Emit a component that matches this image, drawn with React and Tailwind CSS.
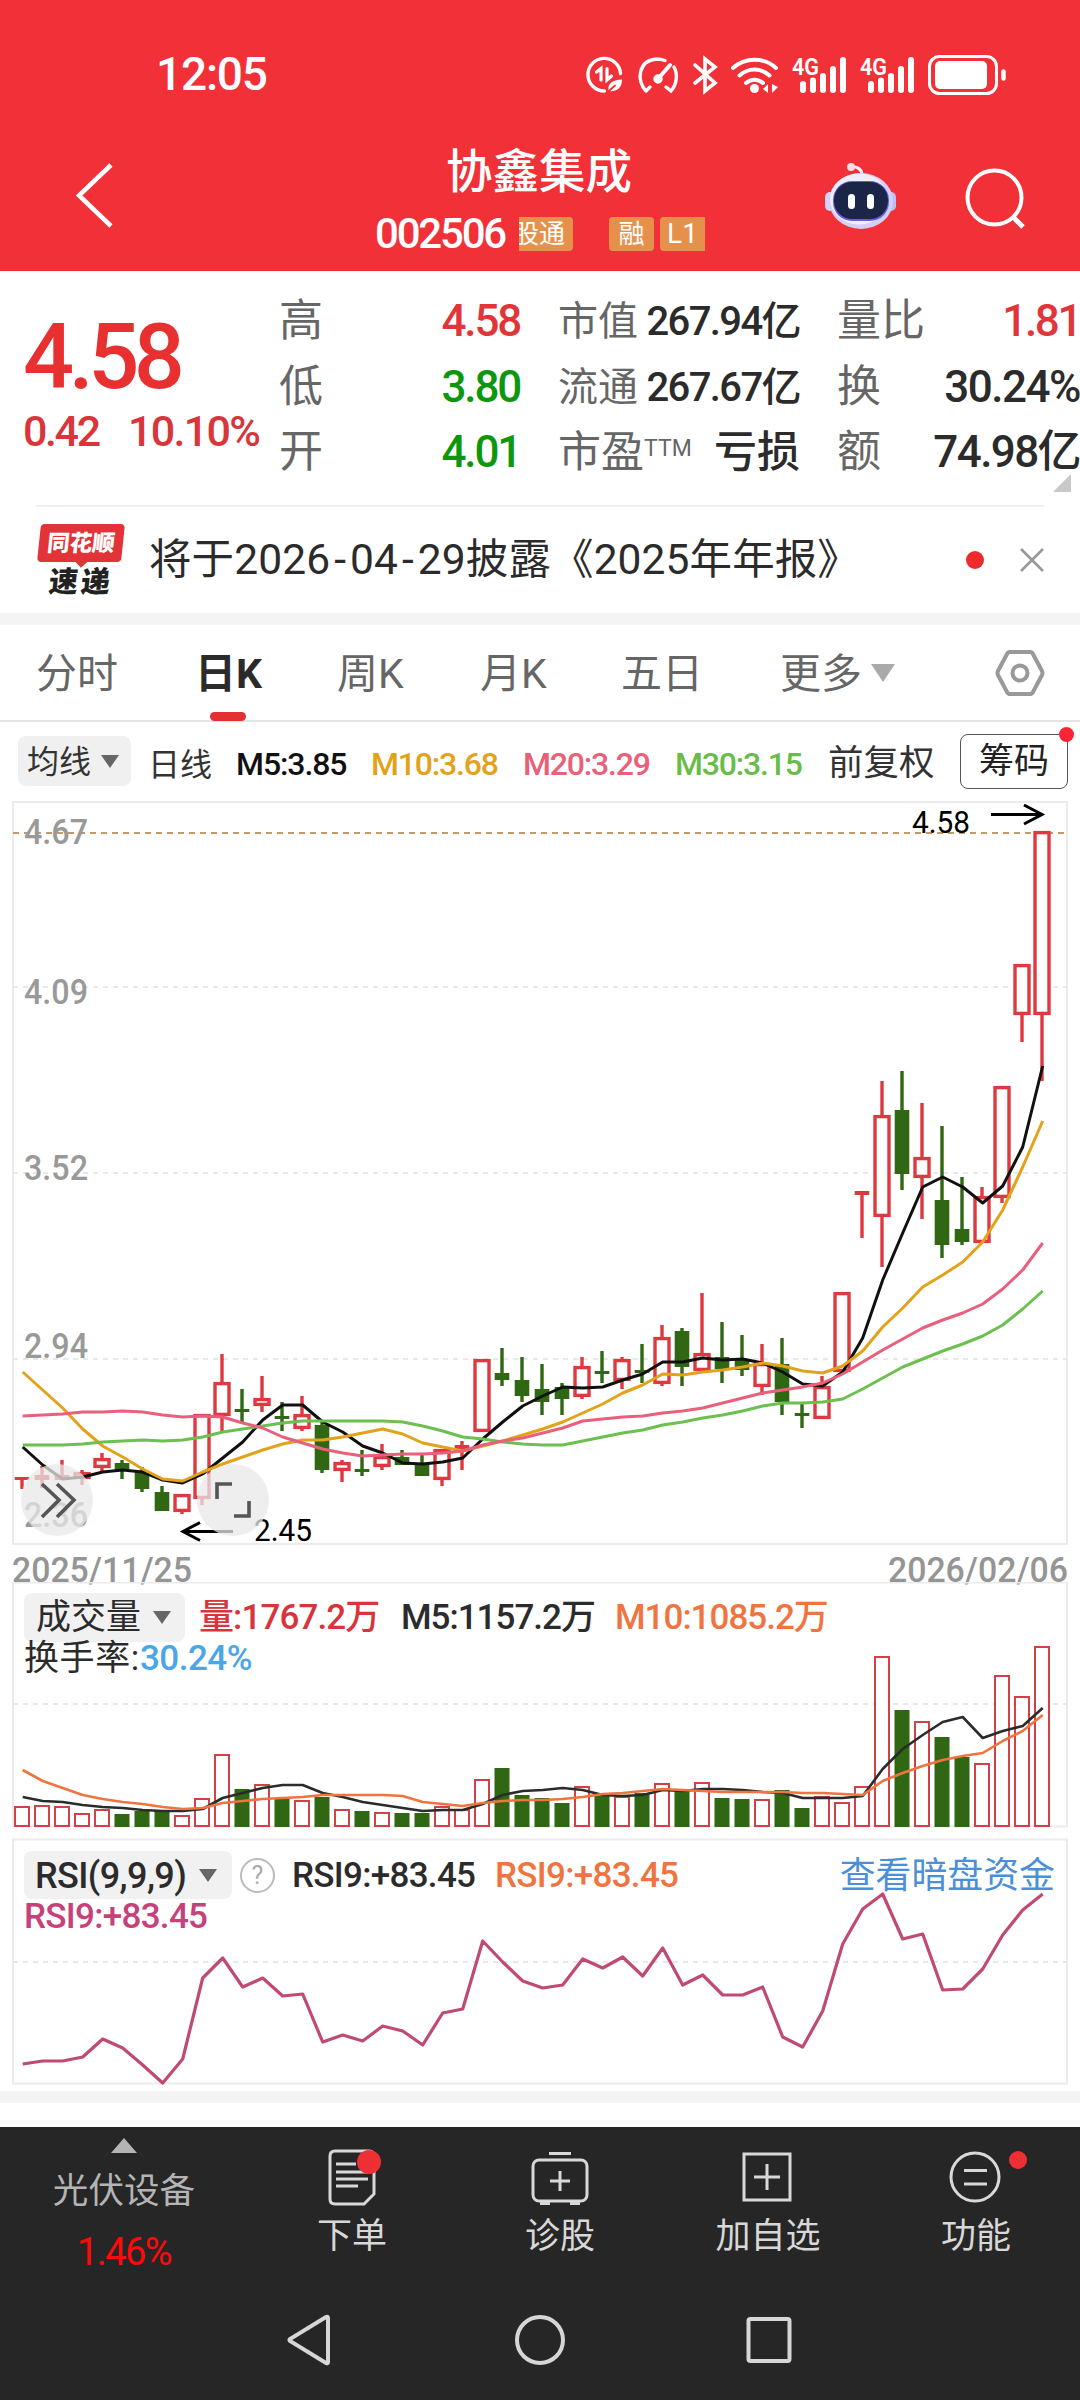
import React from "react";

const STEP = 20;
const X0 = 22;
const RED = "#dc3a40";
const GREEN = "#2f6712";

// type, body top, body bottom, wick top, wick bottom (r = up, g = down)
const candles = [
  ["r", 1477, 1480, 1477, 1489],
  ["r", 1475, 1480, 1466, 1488],
  ["r", 1475, 1480, 1460, 1480],
  ["r", 1472, 1479, 1470, 1485],
  ["r", 1458, 1468, 1453, 1471],
  ["g", 1463, 1471, 1460, 1479],
  ["g", 1472, 1489, 1467, 1492],
  ["g", 1492, 1511, 1486, 1511],
  ["r", 1494, 1512, 1494, 1514],
  ["r", 1414, 1499, 1414, 1505],
  ["r", 1382, 1416, 1354, 1432],
  ["g", 1409, 1412, 1389, 1423],
  ["r", 1398, 1406, 1376, 1412],
  ["g", 1416, 1419, 1402, 1431],
  ["r", 1414, 1429, 1396, 1431],
  ["g", 1425, 1470, 1422, 1473],
  ["r", 1462, 1471, 1460, 1482],
  ["g", 1469, 1472, 1450, 1476],
  ["r", 1456, 1467, 1444, 1470],
  ["g", 1457, 1465, 1450, 1465],
  ["g", 1464, 1476, 1455, 1476],
  ["r", 1449, 1480, 1449, 1486],
  ["r", 1445, 1449, 1441, 1470],
  ["r", 1359, 1432, 1359, 1432],
  ["g", 1373, 1380, 1348, 1386],
  ["g", 1380, 1396, 1357, 1402],
  ["g", 1389, 1402, 1364, 1415],
  ["g", 1387, 1399, 1383, 1415],
  ["r", 1366, 1397, 1357, 1399],
  ["g", 1371, 1374, 1351, 1383],
  ["r", 1359, 1381, 1357, 1389],
  ["g", 1370, 1373, 1344, 1383],
  ["r", 1337, 1384, 1325, 1386],
  ["g", 1331, 1367, 1328, 1386],
  ["r", 1353, 1371, 1293, 1371],
  ["g", 1357, 1369, 1322, 1383],
  ["g", 1360, 1370, 1335, 1376],
  ["r", 1363, 1387, 1344, 1395],
  ["g", 1364, 1402, 1338, 1415],
  ["g", 1413, 1416, 1403, 1428],
  ["r", 1386, 1419, 1376, 1419],
  ["r", 1292, 1372, 1292, 1372],
  ["r", 1191, 1195, 1193, 1238],
  ["r", 1115, 1217, 1081, 1267],
  ["g", 1110, 1174, 1071, 1190],
  ["r", 1157, 1178, 1103, 1219],
  ["g", 1200, 1245, 1126, 1258],
  ["g", 1229, 1242, 1177, 1245],
  ["r", 1196, 1243, 1187, 1243],
  ["r", 1086, 1198, 1086, 1203],
  ["r", 964, 1015, 964, 1042],
  ["r", 831, 1015, 831, 1081],
];

const ma5 = [1447, 1465, 1479, 1477, 1472, 1470, 1472, 1480, 1483, 1474, 1458, 1442, 1420, 1405, 1405, 1422, 1432, 1446, 1453, 1463, 1464, 1462, 1458, 1439, 1422, 1406, 1396, 1387, 1388, 1387, 1380, 1374, 1362, 1362, 1358, 1360, 1359, 1363, 1372, 1384, 1386, 1372, 1338, 1280, 1233, 1187, 1177, 1187, 1203, 1186, 1147, 1066];
const ma10 = [1372, 1390, 1408, 1429, 1446, 1457, 1469, 1479, 1481, 1472, 1464, 1457, 1450, 1444, 1440, 1440, 1437, 1433, 1429, 1434, 1443, 1447, 1451, 1446, 1441, 1435, 1429, 1422, 1413, 1404, 1393, 1385, 1374, 1375, 1372, 1370, 1367, 1363, 1366, 1371, 1373, 1366, 1351, 1327, 1308, 1287, 1275, 1262, 1242, 1210, 1167, 1121];
const ma20 = [1416, 1415, 1414, 1412, 1412, 1411, 1412, 1415, 1417, 1416, 1417, 1423, 1428, 1437, 1443, 1449, 1453, 1456, 1455, 1454, 1454, 1453, 1451, 1445, 1441, 1438, 1433, 1428, 1421, 1419, 1417, 1416, 1413, 1411, 1408, 1403, 1398, 1393, 1390, 1387, 1383, 1374, 1362, 1350, 1339, 1328, 1320, 1313, 1304, 1289, 1270, 1243];
const ma30 = [1445, 1445, 1445, 1444, 1442, 1441, 1440, 1441, 1440, 1437, 1432, 1429, 1426, 1423, 1421, 1421, 1421, 1421, 1421, 1422, 1426, 1431, 1437, 1439, 1442, 1444, 1445, 1445, 1441, 1437, 1433, 1430, 1425, 1422, 1418, 1415, 1411, 1406, 1403, 1403, 1402, 1399, 1389, 1378, 1367, 1359, 1351, 1344, 1336, 1325, 1309, 1291];

const volumes = [1806, 1805, 1806, 1813, 1809, 1814, 1811, 1811, 1815, 1798, 1754, 1789, 1784, 1798, 1800, 1797, 1809, 1811, 1812, 1813, 1813, 1806, 1809, 1779, 1768, 1795, 1798, 1803, 1786, 1796, 1796, 1793, 1783, 1790, 1782, 1798, 1799, 1799, 1790, 1808, 1796, 1802, 1786, 1656, 1710, 1721, 1737, 1757, 1763, 1675, 1696, 1646];
const vol5 = [1797, 1801, 1802, 1805, 1807, 1808, 1810, 1811, 1811, 1809, 1798, 1793, 1788, 1785, 1785, 1793, 1797, 1802, 1805, 1808, 1811, 1810, 1810, 1804, 1795, 1791, 1790, 1788, 1790, 1795, 1796, 1795, 1790, 1791, 1789, 1789, 1790, 1792, 1793, 1798, 1798, 1798, 1796, 1769, 1749, 1735, 1722, 1717, 1738, 1731, 1726, 1708];
const vol10 = [1770, 1781, 1788, 1795, 1799, 1802, 1804, 1807, 1809, 1808, 1803, 1801, 1799, 1798, 1797, 1795, 1795, 1795, 1795, 1796, 1802, 1804, 1806, 1803, 1801, 1800, 1800, 1799, 1797, 1794, 1793, 1791, 1789, 1790, 1791, 1792, 1792, 1792, 1792, 1793, 1793, 1794, 1795, 1781, 1773, 1766, 1760, 1756, 1753, 1741, 1731, 1715];

const rsi = [2064, 2061, 2061, 2057, 2039, 2048, 2065, 2083, 2059, 1978, 1958, 1987, 1978, 1996, 1994, 2042, 2035, 2041, 2026, 2031, 2045, 2013, 2009, 1941, 1962, 1981, 1988, 1985, 1959, 1968, 1957, 1976, 1948, 1985, 1975, 1995, 1995, 1987, 2037, 2047, 2011, 1944, 1909, 1894, 1939, 1934, 1990, 1989, 1969, 1935, 1910, 1894];

const priceLabels = [
  { text: "4.67", y: 844 },
  { text: "4.09", y: 1004 },
  { text: "3.52", y: 1180 },
  { text: "2.94", y: 1358 },
  { text: "2.36", y: 1527 },
];

function Line({ data, color, width = 3 }) {
  const points = data.map((y, i) => `${X0 + 0.7 + i * STEP},${y}`).join(" ");
  return <polyline points={points} fill="none" stroke={color} strokeWidth={width} strokeLinejoin="round" />;
}

function Candle({ x, item }) {
  const [type, top, bottom, high, low] = item;
  const color = type === "r" ? RED : GREEN;
  const hollow = type === "r" && bottom - top > 6;
  return (
    <g>
      {high < top && <rect x={x - 1.7} y={high} width="3.4" height={top - high} fill={color} />}
      {low > bottom && <rect x={x - 1.7} y={bottom} width="3.4" height={low - bottom} fill={color} />}
      {hollow ? (
        <rect x={x - 7} y={top + 1.6} width="14" height={bottom - top - 3.2} fill="#fff" stroke={color} strokeWidth="3.4" />
      ) : (
        <rect x={x - 7.3} y={top} width="14.6" height={bottom - top} fill={color} />
      )}
    </g>
  );
}

function GridLine({ y }) {
  return <line x1="13" x2="1067" y1={y} y2={y} stroke="#e8e8e8" strokeWidth="2" strokeDasharray="5 5" />;
}

function Frame({ y, height }) {
  return <rect x="13" y={y} width="1054" height={height} fill="none" stroke="#ebebeb" strokeWidth="2" />;
}

function KChart() {
  return (
    <svg className="block h-[782px] w-full overflow-visible" viewBox="0 800 1080 782" fontFamily="Roboto">
      <Frame y={802} height={742} />
      <GridLine y={987} />
      <GridLine y={1173} />
      <GridLine y={1359} />
      <line x1="13" x2="1067" y1="833" y2="833" stroke="#c49a6a" strokeWidth="2" strokeDasharray="6 5" />
      {priceLabels.map((l) => (
        <text key={l.text} x="24" y={l.y} textLength="64" lengthAdjust="spacingAndGlyphs" fontSize="35" fontWeight="500" fill="#999">{l.text}</text>
      ))}
      {candles.map((c, i) => (
        <Candle key={i} x={X0 + i * STEP} item={c} />
      ))}
      <Line data={ma5} color="#101010" />
      <Line data={ma10} color="#e3a21a" />
      <Line data={ma30} color="#6bc04f" />
      <Line data={ma20} color="#ea5f7c" />

      <g fill="none" stroke="#000" strokeWidth="3">
        <path d="M991 814.500H1042M1024 805l18 9.500-18 9.500" />
        <path d="M233 1531.500H183M200 1522.500l-17 9 17 9" />
      </g>
      <text x="912" y="832.500" textLength="58" lengthAdjust="spacingAndGlyphs" fontSize="32">4.58</text>
      <text x="254" y="1541" textLength="58" lengthAdjust="spacingAndGlyphs" fontSize="32">2.45</text>

      <circle cx="57" cy="1500" r="36" fill="#e8e8e8" fillOpacity="0.75" />
      <circle cx="233" cy="1500" r="36" fill="#e8e8e8" fillOpacity="0.75" />
      <g fill="none" stroke="#555" strokeWidth="3.600">
        <path d="M42 1484l17 16-17 17M57 1484l17 16-17 17" />
        <path d="M217 1499v-15h15M249 1501v15h-15" />
      </g>
      <text x="12" y="1582" textLength="180" lengthAdjust="spacingAndGlyphs" fontSize="35" fontWeight="500" fill="#959595">2025/11/25</text>
      <text x="888" y="1582" textLength="180" lengthAdjust="spacingAndGlyphs" fontSize="35" fontWeight="500" fill="#959595">2026/02/06</text>
    </svg>
  );
}

function VolumeChart() {
  return (
    <svg className="block h-[256px] w-full" viewBox="0 1582 1080 256">
      <Frame y={1582.5} height={244} />
      <GridLine y={1704} />
      {volumes.map((top, i) => {
        const x = X0 + i * STEP;
        const h = 1827 - top;
        return candles[i][0] === "r" ? (
          <rect key={i} x={x - 7} y={top + 1} width="14" height={h - 2} fill="#fff" stroke="#d24148" strokeWidth="2" />
        ) : (
          <rect key={i} x={x - 7.5} y={top} width="15" height={h} fill={GREEN} />
        );
      })}
      <Line data={vol5} color="#2b2b2b" width={2.6} />
      <Line data={vol10} color="#f0743f" width={2.6} />
    </svg>
  );
}

function RsiChart() {
  return (
    <svg className="block h-[253px] w-full" viewBox="0 1838 1080 253">
      <Frame y={1839.5} height={244} />
      <GridLine y={1962} />
      <Line data={rsi} color="#c04a74" width={3.2} />
    </svg>
  );
}

function DownArrow({ className }) {
  return (
    <svg className={className} viewBox="0 0 18 13" preserveAspectRatio="none">
      <path d="M0 0h18l-9 13z" fill="currentColor" />
    </svg>
  );
}

function StatusIcons() {
  return (
    <svg className="h-[44px] w-[430px]" viewBox="580 50 430 44" fill="none" stroke="#fff" strokeWidth="3.400" strokeLinecap="round">
      {/* data saver */}
      <path d="M620.500 71.500a16.300 16.300 0 1 0-16 17.500" />
      <path d="M596.500 70l4.500-3.500v11.500M607 66.500v11.500l4.500-4" strokeWidth="3.200" />
      <path d="M608.500 89c-1-7 3-11 13.500-11.500 0 8-4.500 12.500-13.500 11.500z" fill="#fff" stroke="none" />
      <path d="M606 91.500l9-8" stroke="#f23038" strokeWidth="1.800" />
      {/* speed */}
      <path d="M646 89c-10-10-8-31 11-32 3 0 5 .5 8 1.500M674 65c4 7 3 17-3 24l-5-4M646 89l4-4" />
      <path d="M657 78l13-15" strokeWidth="4" />
      <circle cx="658" cy="77" r="3" fill="#fff" />
      {/* bluetooth */}
      <path d="M695 63l20 18-10 8V57l10 8-20 16" strokeWidth="3.600" />
      {/* wifi */}
      <path d="M733 66c12-11 31-11 43 0M739.500 73.500c9-8 21-8 30 0M746 81c5-4.500 12-4.500 17 0" strokeWidth="4" />
      <circle cx="754.500" cy="86.500" r="4.500" fill="#fff" stroke="none" />
      <path d="M763 87l5-5v9zM778 85l-6-3v9z" fill="#fff" stroke="none" />
      {[793, 861].map((x) => (
        <g key={x} stroke="none" fill="#fff">
          <text x={x - 1} y="72.500" fontSize="24" fontFamily="Roboto" fontWeight="600" textLength="27" lengthAdjust="spacingAndGlyphs">4G</text>
          <rect x={x + 7} y="79" width="6" height="12" rx="3" />
          <rect x={x + 17} y="75.500" width="6" height="15.500" rx="3" />
          <rect x={x + 27} y="71" width="6" height="20" rx="3" />
          <rect x={x + 37} y="64" width="6" height="27" rx="3" />
          <rect x={x + 47} y="55" width="6" height="36" rx="3" />
        </g>
      ))}
      <rect x="929.500" y="54.500" width="67" height="37" rx="10" strokeWidth="3" />
      <rect x="935" y="59" width="52" height="28" rx="5" fill="#fff" stroke="none" />
      <path d="M1003.500 69.500v7" strokeWidth="4.500" />
    </svg>
  );
}

function Robot() {
  return (
    <svg className="h-[68px] w-[74px]" viewBox="824 162 74 68">
      <path d="M850 167c7-1 12 2 12 8" fill="none" stroke="#f6eefa" strokeWidth="3" strokeLinecap="round" />
      <circle cx="851" cy="167" r="4" fill="#f8dce6" />
      <rect x="825" y="192" width="10" height="19" rx="5" fill="#d5d3f3" />
      <rect x="886" y="192" width="10" height="19" rx="5" fill="#bcbff2" />
      <ellipse cx="861" cy="201" rx="32" ry="28" fill="#d3d0f6" />
      <ellipse cx="859" cy="199" rx="29" ry="25.500" fill="#f1eefb" />
      <rect x="833" y="181" width="56" height="40" rx="19" fill="#6a5be0" />
      <rect x="834" y="182" width="54" height="37" rx="18" fill="#1b2547" />
      <rect x="848" y="194" width="7" height="15" rx="3.500" fill="#fff" />
      <rect x="867" y="194" width="7" height="15" rx="3.500" fill="#fff" />
    </svg>
  );
}

function Header() {
  return (
    <header className="h-[271px] bg-[#f23038] text-white">
      <div className="flex h-[147px] items-center justify-between pr-[70px] pl-[156px]">
        <span className="text-[46px] leading-none font-medium tracking-[-1.200px]">12:05</span>
        <StatusIcons />
      </div>
      <div className="flex h-[124px]">
        <svg className="mt-[15px] ml-[70px] h-[68px] w-[50px]" viewBox="70 162 50 68">
          <path d="M111 165L79 195.500l32 30.500" fill="none" stroke="#fff" strokeWidth="4.500" />
        </svg>
        <div className="ml-[255px] w-[332px]">
          <h1 className="ml-[71px] h-[66px] pt-[1px] text-[46.500px] leading-[48px] font-medium">协鑫集成</h1>
          <div className="flex h-[40px] items-center pt-[2px] whitespace-nowrap">
            <span className="w-[144px] shrink-0 text-[42px] leading-none font-medium tracking-[-2.200px]">002506</span>
            <span className="flex h-[34px] w-[54px] shrink-0 items-center justify-end overflow-hidden rounded-r bg-[#e6914b] pr-[8px] text-[26px] leading-none">
              股通
            </span>
            <span className="ml-[36px] flex h-[34px] w-[45px] shrink-0 items-center justify-center rounded bg-[#e6914b] text-[26px] leading-none">融</span>
            <span className="ml-[6px] flex h-[34px] w-[45px] shrink-0 items-center justify-center rounded-l bg-[#e6914b] text-[28px] leading-none">L1</span>
          </div>
        </div>
        <div className="mt-[15px] ml-[117px] shrink-0">
          <Robot />
        </div>
        <svg className="mt-[15px] ml-[66px] h-[68px] w-[66px] shrink-0" viewBox="964 162 66 68">
          <circle cx="994.500" cy="197.500" r="27" fill="none" stroke="#fff" strokeWidth="4" />
          <path d="M1013 217l10 10" stroke="#fff" strokeWidth="5" />
        </svg>
      </div>
    </header>
  );
}

function Quote() {
  return (
    <section className="flex h-[234px] pt-[18px] whitespace-nowrap">
      <div className="w-[279px] pl-[23px] font-medium text-[#e93030]">
        <div className="h-[106px] text-[90px] leading-[138px] tracking-[-5.500px]">4.58</div>
        <div className="flex text-[43px] leading-[72px] text-[#d9363c]">
          <span className="w-[105px] tracking-[-2.400px]">0.42</span>
          <span className="tracking-[-1.700px]">10.10%</span>
        </div>
      </div>
      <div className="w-[241px] text-[44px] leading-[65.500px] text-[#666]">
        <div className="flex justify-between">高<span className="font-medium tracking-[-2.200px] text-[#e0363a]">4.58</span></div>
        <div className="flex justify-between">低<span className="font-medium tracking-[-2.200px] text-[#0c970c]">3.80</span></div>
        <div className="flex justify-between">开<span className="font-medium tracking-[-2.200px] text-[#0c970c]">4.01</span></div>
      </div>
      <div className="ml-[38px] w-[242px] text-[40px] leading-[65.500px] text-[#666]">
        <div className="flex justify-between">市值<span className="font-medium tracking-[-1.600px] text-[#2b2b2b]">267.94亿</span></div>
        <div className="flex justify-between">流通<span className="font-medium tracking-[-1.600px] text-[#2b2b2b]">267.67亿</span></div>
        <div className="flex justify-between text-[43px]">
          <span>市盈<sup className="text-[23px]">TTM</sup></span>
          <span className="font-medium text-[#2b2b2b]">亏损</span>
        </div>
      </div>
      <div className="relative ml-[37px] w-[243px] text-[44px] leading-[65.500px] text-[#666]">
        <div className="flex justify-between">量比<span className="font-medium tracking-[-2.400px] text-[#e0363a]">1.81</span></div>
        <div className="flex justify-between">换<span className="font-medium tracking-[-1.500px] text-[#2b2b2b]">30.24%</span></div>
        <div className="flex justify-between">额<span className="font-medium tracking-[-1.600px] text-[#2b2b2b]">74.98亿</span></div>
        <svg className="absolute top-[185px] right-[9px] size-[18px]" viewBox="0 0 18 18">
          <path d="M18 0v18H0z" fill="#c8c8c8" />
        </svg>
      </div>
    </section>
  );
}

function News() {
  return (
    <section className="mx-[36px] flex h-[108px] items-center border-t-2 border-[#f0f0f0] whitespace-nowrap">
      <div className="flex w-[90px] flex-col items-center">
        <div className="relative flex h-[38px] w-[84px] -skew-x-6 items-center justify-center rounded bg-[#e23338] text-[22.500px] leading-none font-black text-white">
          同花顺
          <span className="absolute -bottom-[4px] left-[40px] size-[9px] rotate-45 bg-[#e23338]"></span>
        </div>
        <div className="mt-[5px] -skew-x-6 text-[29px] leading-[30px] font-black tracking-[3px] text-[#222]">速递</div>
      </div>
      <div className="ml-[23px] flex-1 text-[42.500px] tracking-[0.100px] text-[#2b2b2b]">
        将于2026<span className="px-[4px]">-</span>04<span className="px-[4px]">-</span>29披露《2025年年报》
      </div>
      <span className="size-[18px] rounded-full bg-[#ee2a2c]"></span>
      <svg className="ml-[36px] size-[24px]" viewBox="0 0 24 24">
        <path d="M1 1l22 22M23 1L1 23" stroke="#999" strokeWidth="2.600" />
      </svg>
    </section>
  );
}

function Tabs() {
  return (
    <nav className="flex h-[97px] items-center border-b-2 border-[#e4e4e6] pl-[36px] text-[41px] whitespace-nowrap text-[#666]">
      <span className="w-[159px] pt-[5px]">分时</span>
      <span className="relative w-[142px] pt-[5px] font-bold text-[#2b2b2b]">
        日K
        <span className="absolute -bottom-[15px] left-[15px] h-[9px] w-[36px] rounded-full bg-[#e33033]"></span>
      </span>
      <span className="w-[143px] pt-[5px]">周K</span>
      <span className="w-[141px] pt-[5px]">月K</span>
      <span className="w-[159px] pt-[5px]">五日</span>
      <span className="pt-[5px]">更多</span>
      <DownArrow className="ml-[9px] h-[18px] w-[24px] text-[#aaa]" />
      <svg className="ml-[98px] h-[50px] w-[54px]" viewBox="0 0 54 50" fill="none" stroke="#999" strokeWidth="4">
        <path d="M17 4h20q2 0 3 2l9 17q1 2 0 4l-9 17q-1 2-3 2H17q-2 0-3-2L5 27q-1-2 0-4l9-17q1-2 3-2z" />
        <circle cx="27" cy="25" r="7.500" />
      </svg>
    </nav>
  );
}

function Averages() {
  return (
    <div className="flex h-[78px] items-center text-[32px] whitespace-nowrap text-[#333]">
      <div className="ml-[18px] flex h-[50px] w-[113px] items-center rounded-lg bg-[#f0f0f0] pl-[9px]">
        <span className="pt-[2px]">均线</span>
        <DownArrow className="ml-[10px] h-[13px] w-[18px] text-[#666]" />
      </div>
      <span className="mt-[7px] ml-[17px] w-[88px]">日线</span>
      <span className="mt-[6px] w-[135px] font-medium tracking-[-1.100px] text-[#111]">M5:3.85</span>
      <span className="mt-[6px] w-[152px] font-medium tracking-[-1.200px] text-[#e3a21a]">M10:3.68</span>
      <span className="mt-[6px] w-[152px] font-medium tracking-[-1.200px] text-[#ea6079]">M20:3.29</span>
      <span className="mt-[6px] w-[152px] font-medium tracking-[-1.200px] text-[#68bd48]">M30:3.15</span>
      <span className="mt-[5px] w-[133px] pl-[1px] text-[35.500px]">前复权</span>
      <div className="relative flex h-[55px] w-[108px] items-center justify-center rounded-lg border-[1.500px] border-[#555] pt-[3px] text-[35px] text-[#222]">
        筹码
        <span className="absolute -top-[8px] -right-[7px] size-[15px] rounded-full bg-[#fb2436]"></span>
      </div>
    </div>
  );
}

function Volume() {
  return (
    <div className="relative">
      <VolumeChart />
      <div className="absolute top-[11px] left-[24px] text-[35px] font-medium whitespace-nowrap text-[#2b2b2b]">
        <div className="flex h-[49px] items-center">
          <div className="flex h-full w-[161px] items-center rounded-lg bg-[#f1f1f1] pl-[12px] font-normal">
            <span className="pt-[2px]">成交量</span>
            <DownArrow className="ml-[12px] h-[13px] w-[18px] text-[#666]" />
          </div>
          <span className="ml-[14px] w-[202px] pt-[2px] tracking-[-0.900px] text-[#d6353b]">量:1767.2万</span>
          <span className="w-[214px] pt-[2px] tracking-[-1px]">M5:1157.2万</span>
          <span className="pt-[2px] tracking-[-1px] text-[#f0743f]">M10:1085.2万</span>
        </div>
        <div className="-mt-[1px] leading-[36px]">
          <span className="font-normal tracking-[0.600px]">换手率:</span><span className="tracking-[-0.500px] text-[#4aa6e6]">30.24%</span>
        </div>
      </div>
    </div>
  );
}

function Rsi() {
  return (
    <div className="relative">
      <RsiChart />
      <div className="absolute top-[13px] left-[24px] w-[1031px] text-[35px] font-medium whitespace-nowrap text-[#2b2b2b]">
        <div className="flex h-[48px] items-center">
          <div className="flex h-full w-[208px] items-center rounded-lg bg-[#f1f1f1] pl-[11px] text-[36px]">
            <span className="w-[164px] pt-[2px] tracking-[-0.600px]">RSI(9,9,9)</span>
            <DownArrow className="h-[13px] w-[18px] text-[#666]" />
          </div>
          <span className="ml-[8px] flex size-[35px] items-center justify-center rounded-full border-[2.500px] border-[#bbb] text-[25px] leading-none font-normal text-[#aaa]">?</span>
          <span className="ml-[17px] w-[203px] pt-[2px] tracking-[-0.700px]">RSI9:+83.45</span>
          <span className="pt-[2px] tracking-[-0.700px] text-[#f0743f]">RSI9:+83.45</span>
          <span className="ml-auto pt-[3px] text-[35.900px] font-normal text-[#4a8fd8]">查看暗盘资金</span>
        </div>
        <div className="leading-[36px] tracking-[-0.700px] text-[#c6417a]">RSI9:+83.45</div>
      </div>
    </div>
  );
}

function BottomItem({ label, children }) {
  return (
    <div className="flex w-[208px] flex-col items-center">
      <svg className="mt-[18px] h-[64px] w-[104px]" viewBox="-52 -32 104 64" fill="none" stroke="#d8d8d8" strokeWidth="3">
        {children}
      </svg>
      <span className="mt-[10px] text-[35px] leading-[36px]">{label}</span>
    </div>
  );
}

function BottomBar() {
  return (
    <footer className="h-[273px] bg-[#262626] text-[#d8d8d8]">
      <div className="flex h-[163px]">
        <div className="flex w-[248px] flex-col items-center pt-[11px] text-[#b4b4b4]">
          <DownArrow className="h-[15px] w-[26px] rotate-180" />
          <span className="mt-[19px] text-[35.600px] leading-[38px]">光伏设备</span>
          <span className="mt-[22px] text-[38px] leading-[40px] tracking-[-1.600px] text-[#ff0a0a]">1.46%</span>
        </div>
        <BottomItem label="下单">
          <path d="M-22-21q0-5 5-5h34q5 0 5 5v38l-10 10h-29q-5 0-5-5z" />
          <path d="M-16-13h20M-16-5h32M-16 2h32M-16 9h22" />
          <circle cx="17" cy="-15" r="12" fill="#ee2f33" stroke="none" />
        </BottomItem>
        <BottomItem label="诊股">
          <rect x="-27" y="-17" width="54" height="41" rx="6" />
          <path d="M-11-23.500h22M-10 4h20M0-6v20M-20 26.500h10M10 26.500h10" />
        </BottomItem>
        <BottomItem label="加自选">
          <rect x="-24" y="-23" width="46" height="46" />
          <path d="M-14 0h26M-1-13v26" />
        </BottomItem>
        <BottomItem label="功能">
          <circle cx="-1" cy="0" r="24" />
          <path d="M-12-6.500h23M-12 7h23" />
          <circle cx="42" cy="-17" r="9" fill="#ee2f33" stroke="none" />
        </BottomItem>
      </div>
      <svg className="block h-[100px] w-full" viewBox="0 2290 1080 100" fill="none" stroke="#d6d6d6" strokeWidth="4">
        <path d="M328 2318v44q0 2-2 1l-36-22q-1-1 0-2l36-22q2-1 2 1z" />
        <circle cx="540" cy="2340" r="23" />
        <rect x="748.500" y="2319" width="41" height="42" rx="2" />
      </svg>
    </footer>
  );
}

function App() {
  return (
    <div className="h-[2400px] w-[1080px] overflow-hidden bg-white font-['Roboto','Noto_Sans_CJK_SC',sans-serif]">
      <Header />
      <Quote />
      <News />
      <div className="h-[12px] bg-[#f4f4f4]"></div>
      <Tabs />
      <Averages />
      <KChart />
      <Volume />
      <Rsi />
      <div className="mb-[24px] h-[12px] bg-[#f4f4f4]"></div>
      <BottomBar />
    </div>
  );
}

export default App;
